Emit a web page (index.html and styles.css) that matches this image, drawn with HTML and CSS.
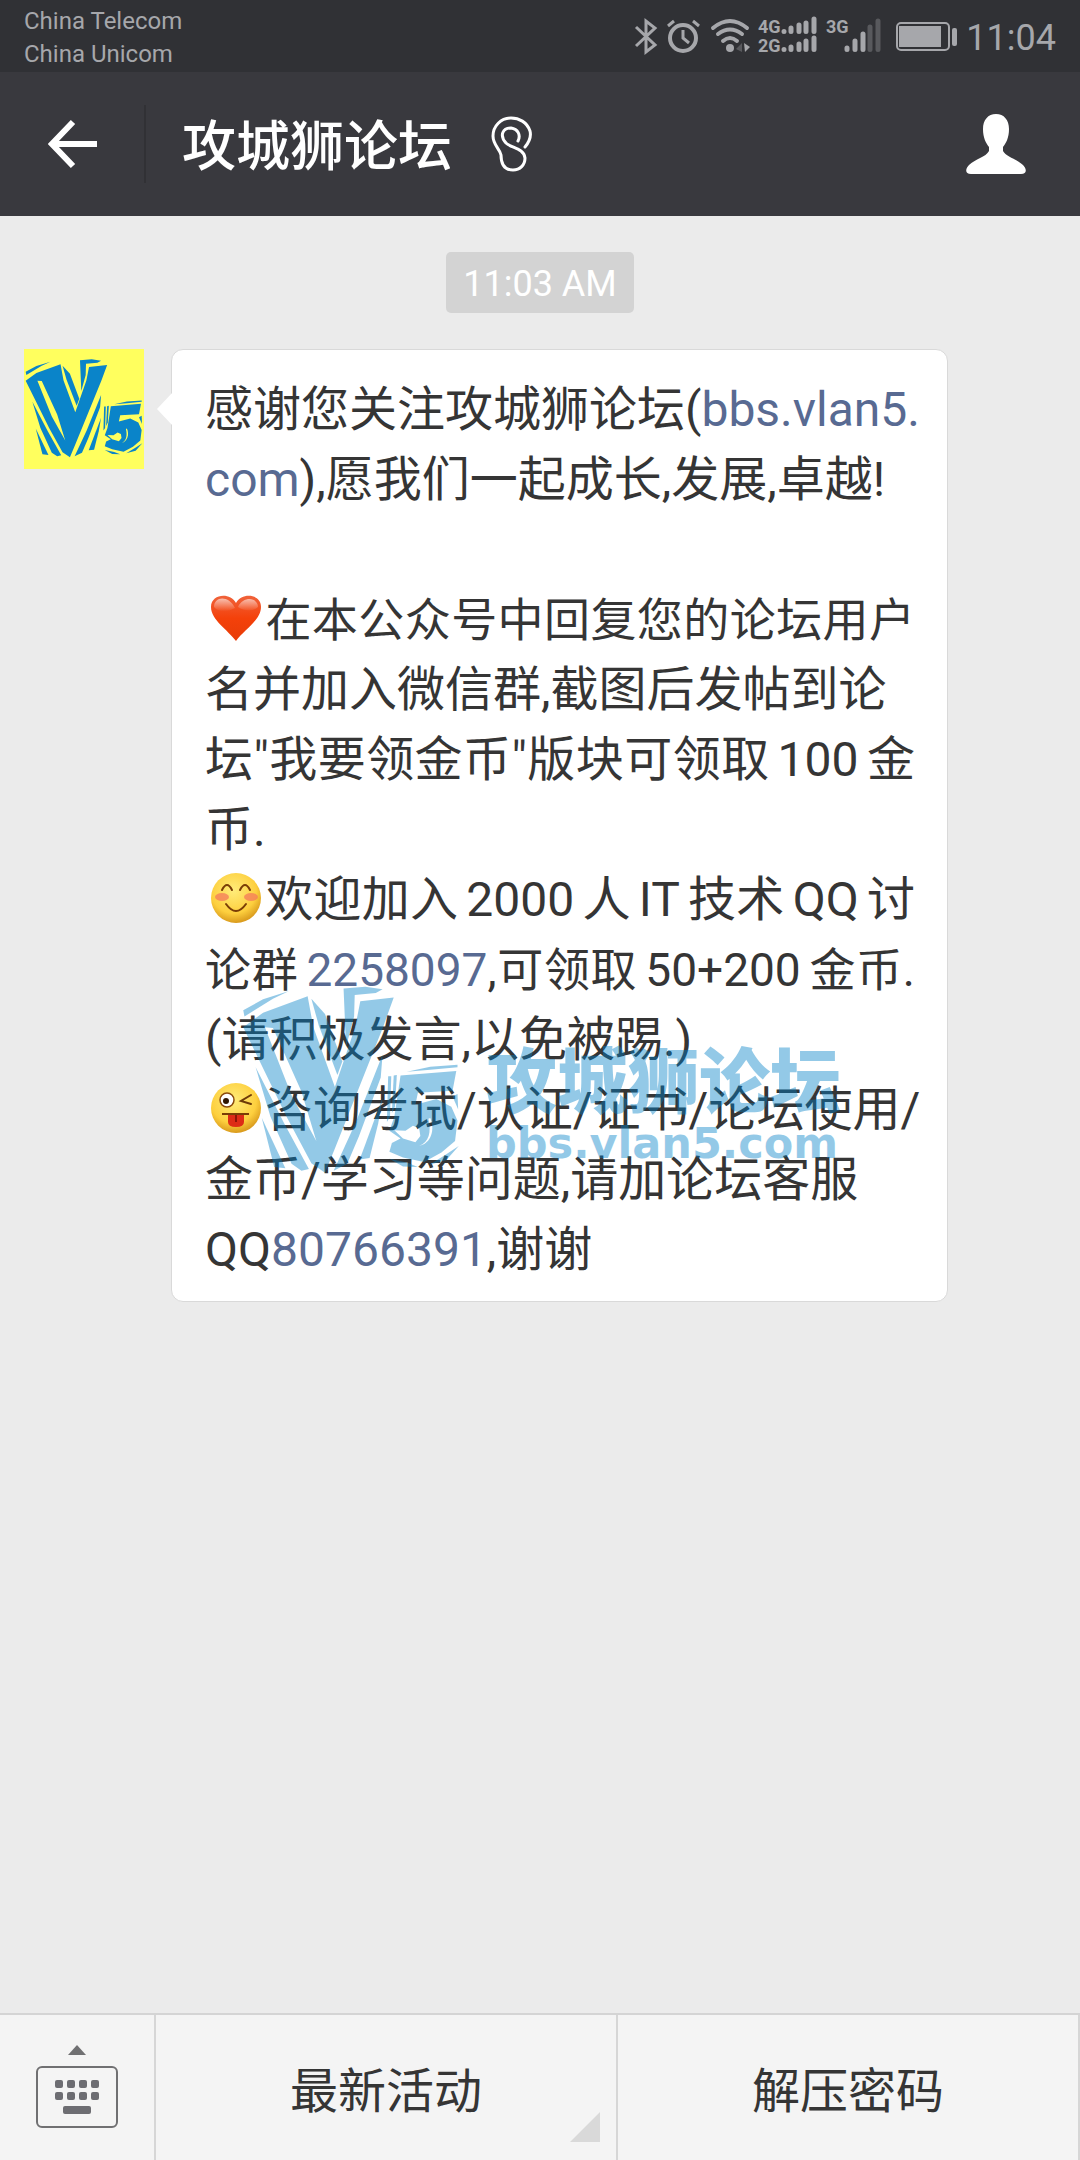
FILE: index.html
```html
<!DOCTYPE html>
<html lang="zh-CN">
<head>
	<meta charset="UTF-8">
	<meta name="viewport" content="width=device-width, initial-scale=1">
	<title>攻城狮论坛</title>
	<link rel="stylesheet" href="styles.css">
</head>
<body>

<!-- shared shapes -->
<svg class="defs" width="0" height="0" aria-hidden="true">
	<symbol id="v5" viewBox="16 56 352 296" preserveAspectRatio="none">
		<path d="M18 94 L50 77 L92 64 L66 76 L20 104 Z"/>
		<path fill-rule="evenodd" d="M18 121 L50 98 L122 72 L131 120 L166 215 L199 120 L207 80 L261 74 L244 120 L166 312 L150 350 L128 335 L88 262 Z M53 121 L96 228 L136 300 L112 222 L66 122 Z"/>
		<path d="M128 76 L150 100 L178 175 L170 196 L140 118 Z"/>
		<path d="M180 60 L215 57 L243 61 L232 67 L198 70 L197 104 L184 152 Z"/>
		<path d="M38 184 L84 272 L124 344 L112 347 L96 336 L62 262 Z"/>
		<path d="M48 264 L86 343 L68 341 Z"/>
		<path d="M243 164 L240 200 L205 292 L186 336 L164 347 L200 270 Z"/>
		<path d="M243 232 L236 272 L222 327 L206 329 Z"/>
		<path d="M282 191 L320 183 L364 180 L364 184 L320 188 Z"/>
		<path d="M252 198 L257 198 L255 262 L250 270 Z"/>
		<path d="M261 197 L266 196 L263 246 L258 256 Z"/>
		<path fill-rule="evenodd" d="M272 197 L362 190 L356 221 L300 224 L296 243 L330 234 L354 246 L364 268 L360 300 L338 318 L310 333 L276 326 L254 317 L258 303 L272 296 L254 284 L262 262 Z M262 283 L276 296 L296 302 L304 292 L302 280 L292 276 L280 284 Z M320 264 C328 282 322 304 302 308 C318 302 322 286 317 265 Z"/>
		<path d="M254 328 L282 334 L300 341 L276 340 Z"/>
		<path d="M366 308 L346 330 L318 338 L344 322 Z"/>
		<path d="M356 230 L364 226 L365 250 Z"/>
	</symbol>
	<radialGradient id="face" cx="45%" cy="35%" r="65%">
		<stop offset="0" stop-color="#ffec7a"/>
		<stop offset="0.7" stop-color="#fdcf3e"/>
		<stop offset="1" stop-color="#d99a1c"/>
	</radialGradient>
	<linearGradient id="red" x1="0" y1="0" x2="0" y2="1">
		<stop offset="0" stop-color="#f0623a"/>
		<stop offset="0.5" stop-color="#f4410a"/>
		<stop offset="1" stop-color="#e83c08"/>
	</linearGradient>
	<linearGradient id="shine" x1="0" y1="0" x2="0" y2="1">
		<stop offset="0" stop-color="#fff" stop-opacity="0.6"/>
		<stop offset="1" stop-color="#fff" stop-opacity="0"/>
	</linearGradient>
</svg>

<div class="status">
	<div class="carriers">
		<div>China Telecom</div>
		<div>China Unicom</div>
	</div>
	<div class="indicators">
		<svg width="24" height="72" viewBox="632 0 24 72" aria-label="Bluetooth">
			<path class="line" d="M634 27 L653 45 L644 52 V21 L653 28 L634 46"/>
		</svg>
		<svg width="36" height="72" viewBox="665 0 36 72" aria-label="Alarm">
			<circle class="line thick" cx="682" cy="38" r="13"/>
			<path class="line" d="M682 30 V38 L688 43 M667 26 L673 21 M698 26 L692 21"/>
		</svg>
		<svg width="40" height="72" viewBox="708 0 40 72" aria-label="Wi-Fi">
			<path class="line thick" d="M711 28 Q728 14 745 28 M716 34 Q728 25 740 34 M721 41 Q728 35 735 41"/>
			<circle class="solid" cx="728" cy="48" r="4"/>
			<path class="dim" d="M734 49 L740 43 V52 Z"/>
			<path class="solid" d="M742 43 L748 47 L743 52 Z"/>
		</svg>
		<svg class="net" width="60" height="72" viewBox="757 0 60 72" aria-label="Signal 4G 2G">
			<text x="757" y="33">4G</text>
			<text x="757" y="52">2G</text>
			<path class="bar" d="M783 31.5V31.6 M790 28V31.5 M798 25V31.5 M805 23V31.5 M813 19V31.5 M783 49.5V49.6 M790 47V49.5 M798 44V49.5 M805 41V49.5 M813 38V49.5"/>
		</svg>
		<svg class="net" width="56" height="72" viewBox="826 0 56 72" aria-label="Signal 3G">
			<text x="826" y="33">3G</text>
			<path class="bar" d="M847 48V49.5 M855 41V49.5 M863 34V49.5"/>
			<path class="bar off" d="M870 27V49.5 M878 21V49.5"/>
		</svg>
		<svg class="battery" width="62" height="72" viewBox="896 0 62 72" aria-label="Battery">
			<rect class="line thin" x="897" y="23" width="52" height="27" rx="4"/>
			<rect class="solid" x="899" y="26" width="42" height="21"/>
			<rect class="solid" x="952" y="28" width="5" height="18" rx="2"/>
		</svg>
		<div class="clock">11:04</div>
	</div>
</div>

<header class="bar-top">
	<button class="icon-button back" aria-label="返回">
		<svg width="50" height="50" viewBox="48 119 50 50">
			<path d="M73 122 L52 144 L73 166 M52 144 H97" fill="none" stroke="#fff" stroke-width="6"/>
		</svg>
	</button>
	<h1>攻城狮论坛</h1>
	<svg class="ear" width="42" height="58" viewBox="490 115 42 58" aria-label="听筒模式">
		<path d="M525 147 C530 141 531 135 530 131 C527 122 519 118 511 118 C501 118 493 126 493 136 C493 145 500 149 501 155 C501 165 505 170 513 170 C520 170 525 165 525 158 C524 148 511 148 506 143 C499 135 503 128 511 128 C518 129 521 135 518 141" fill="none" stroke="#fff" stroke-width="3" stroke-linecap="round"/>
	</svg>
	<button class="icon-button profile" aria-label="公众号资料">
		<svg width="60" height="60" viewBox="0 0 60 60">
			<path d="M30 0 C38 0 43 6 43 15 C43 24 40 29 37 33 V37 C40 43 51 45 57 51 C61 55 61 60 55 60 H5 C-1 60 -1 55 3 51 C9 45 20 43 23 37 V33 C20 29 17 24 17 15 C17 6 22 0 30 0 Z" fill="#fff"/>
		</svg>
	</button>
</header>

<main class="chat">
	<time class="stamp">11:03 AM</time>

	<div class="message">
		<svg class="avatar" viewBox="0 0 120 120" role="img" aria-label="V5">
			<rect width="120" height="120" fill="#ffff5e"/>
			<use href="#v5" x="1" y="10" width="118" height="99"/>
		</svg>
		<div class="bubble">
			<p>
				<span class="row">感谢您关注攻城狮论坛(<a href="#bbs">bbs.vlan5.</a></span>
				<span class="row left"><a href="#bbs">com</a>),愿我们一起成长,发展,卓越!</span>
			</p>
			<p>
				<span class="row tight"><svg class="emoji" viewBox="0 0 52 52" role="img" aria-label="爱心"><path d="M26 49 C18 38 1 28 1 15 C1 2 20 0 26 11 C32 0 51 2 51 15 C51 28 34 38 26 49 Z" fill="url(#red)"/><path d="M4 15 C4 4 19 3 25 16 C18 20 9 21 4 15 Z M28 15 C33 4 48 5 48 15 C43 20 34 19 28 15 Z" fill="url(#shine)"/></svg>在本公众号中回复您的论坛用户</span>
				<span class="row left">名并加入微信群,截图后发帖到论</span>
				<span class="row">坛"我要领金币"版块可领取<span class="latin">100</span>金</span>
				<span class="row left">币.</span>
			</p>
			<p>
				<span class="row"><svg class="emoji" viewBox="0 0 52 52" role="img" aria-label="愉快"><circle cx="26" cy="26" r="25" fill="url(#face)"/><ellipse cx="12" cy="25" rx="7" ry="4" fill="#f4795b" opacity="0.75"/><ellipse cx="41" cy="25" rx="7" ry="4" fill="#f4795b" opacity="0.75"/><path d="M12 18 Q17 8 22 18 M30 18 Q35 8 40 18 M16 32 Q26 46 36 32" fill="none" stroke="#7a3d06" stroke-width="2" stroke-linecap="round"/></svg>欢迎加入<span class="latin">2000</span>人<span class="latin">IT</span>技术<span class="latin">QQ</span>讨</span>
				<span class="row tight">论群<a class="before" href="#group">2258097</a>,可领取<span class="latin">50+200</span>金币.</span>
				<span class="row left">(请积极发言,以免被踢.)</span>
			</p>
			<p>
				<span class="row"><svg class="emoji" viewBox="0 0 52 52" role="img" aria-label="调皮"><circle cx="26" cy="26" r="25" fill="url(#face)"/><circle cx="17" cy="18" r="7" fill="#fff" stroke="#8a4a0c" stroke-width="1.5"/><circle cx="16" cy="19" r="3" fill="#301703"/><path d="M41 13 L31 19 L41 22" fill="none" stroke="#6d3a08" stroke-width="2" stroke-linecap="round"/><path d="M12 32 H39" stroke="#7a3d06" stroke-width="2"/><path d="M18 33 H34 V40 Q34 45 26 45 Q18 45 18 40 Z" fill="#dd2c16"/><path d="M26 33 V40" stroke="#8d1508" stroke-width="2"/></svg>咨询考试/认证/证书/论坛使用/</span>
				<span class="row left">金币/学习等问题,请加论坛客服</span>
				<span class="row left">QQ<a href="#service">80766391</a>,谢谢</span>
			</p>
			<div class="watermark">
				<svg class="mark" width="218" height="188"><use href="#v5" width="218" height="188"/></svg>
				<div class="mark-text">
					<div class="mark-name">攻城狮论坛</div>
					<div class="mark-site">bbs.vlan5.com</div>
				</div>
			</div>
		</div>
	</div>
</main>

<nav class="menu">
	<button class="menu-item" aria-label="键盘">
		<svg width="84" height="86" viewBox="36 2045 84 86">
			<path d="M78 2046 L87 2056 H69 Z" fill="#707072"/>
			<rect x="38" y="2068" width="80" height="60" rx="5" fill="none" stroke="#707072" stroke-width="2"/>
			<g fill="#6d6d72">
				<rect x="56" y="2081" width="8" height="8" rx="2"/>
				<rect x="68" y="2081" width="8" height="8" rx="2"/>
				<rect x="80" y="2081" width="8" height="8" rx="2"/>
				<rect x="92" y="2081" width="8" height="8" rx="2"/>
				<rect x="56" y="2093" width="8" height="8" rx="2"/>
				<rect x="68" y="2093" width="8" height="8" rx="2"/>
				<rect x="80" y="2093" width="8" height="8" rx="2"/>
				<rect x="92" y="2093" width="8" height="8" rx="2"/>
				<rect x="64" y="2107" width="28" height="8" rx="2"/>
			</g>
		</svg>
	</button>
	<button class="menu-item has-sub">最新活动</button>
	<button class="menu-item">解压密码</button>
</nav>

</body>
</html>
```
FILE: styles.css
```css
* { box-sizing: border-box; }
html, body { margin: 0; padding: 0; }
body { display: flex; flex-direction: column; min-height: 100vh; background: #ebebeb; }
body { font-family: Roboto, "Noto Sans CJK SC", sans-serif; color: #353535; }
button { font: inherit; color: inherit; border: 0; padding: 0; background: none; cursor: pointer; }
svg { display: block; }
a { color: #586a92; text-decoration: none; }
.defs { position: absolute; }

/* status bar */
.status { display: flex; justify-content: space-between; height: 72px; padding: 0 24px; background: #303135; color: #a6a7ab; }
.carriers { padding-top: 5px; font-size: 24px; line-height: 33px; }
.indicators { display: flex; gap: 8px; }
.clock { font-size: 36px; line-height: 76px; }
.line { fill: none; stroke: #a6a7ab; stroke-width: 3px; }
.thick { stroke-width: 4px; stroke-linecap: round; }
.thin { stroke-width: 2px; }
.solid { fill: #a6a7ab; }
.dim { fill: #58595d; }
.net text { font-size: 18px; font-weight: 700; font-family: "Liberation Sans Narrow", Roboto, sans-serif; fill: #a6a7ab; }
.bar { fill: none; stroke: #a6a7ab; stroke-width: 5px; stroke-linecap: round; }
.off { stroke: #58595d; }
.battery { margin-left: 6px; }

/* title bar */
.bar-top { display: flex; align-items: center; height: 144px; padding-right: 54px; background: #39393e; color: #fff; }
.icon-button { display: flex; align-items: center; }
.back { width: 146px; height: 78px; padding-left: 48px; border-right: 2px solid #313135; }
.bar-top h1 { margin: 0 0 0 36px; padding-top: 8px; font-size: 54px; line-height: 78px; font-weight: 500; }
.ear { margin-left: 38px; }
.profile { margin-left: auto; }

/* conversation */
.chat { flex: 1; display: flex; flex-direction: column; padding: 36px 24px; }
.stamp { align-self: center; padding: 3px 17px 0; border-radius: 5px; background: #d3d3d3; color: #fff; font-size: 36px; line-height: 58px; }
.message { display: flex; align-items: flex-start; gap: 27px; margin-top: 36px; }
.avatar { flex: none; width: 120px; height: 120px; fill: #0a84c9; }
.bubble { position: relative; width: 777px; padding: 25px 32px 16px 33px; border: 1px solid #d9d9d9; border-radius: 12px; background: #fff; }
.bubble { font-size: 48px; line-height: 70px; }
.bubble::before { content: ""; position: absolute; left: -15px; top: 42px; width: 16px; height: 34px; background: #fff; clip-path: polygon(0 50%, 100% 0, 100% 100%); }
.bubble p { margin: 0; }
.bubble p:first-child { margin-bottom: 70px; }
.row { display: block; height: 70px; white-space: nowrap; text-align: justify; text-align-last: justify; }
.left { text-align-last: left; }
.tight { font-size: 46px; }
.latin { margin: 0 8px; }
.before { margin-left: 8px; }
.emoji { display: inline-block; width: 52px; height: 52px; margin: 0 3px 0 5px; vertical-align: -8px; }

.watermark { position: absolute; left: 70px; top: 636px; display: flex; gap: 26px; color: #0080c8; fill: #0080c8; opacity: 0.42; pointer-events: none; }
.mark { flex: none; }
.mark-text { padding-top: 61px; white-space: nowrap; }
.mark-name { font-size: 71px; line-height: 72px; font-weight: 900; }
.mark-site { font-family: "DejaVu Sans", sans-serif; font-size: 43px; line-height: 48px; font-weight: 700; }

/* bottom menu */
.menu { display: grid; grid-template-columns: 156px 1fr 1fr; height: 147px; border-top: 2px solid #d4d4d4; background: #f4f4f4; }
.menu-item { display: flex; align-items: center; justify-content: center; padding-bottom: 2px; border-right: 2px solid #d6d6d6; font-size: 48px; }
.has-sub { position: relative; }
.has-sub::after { content: ""; position: absolute; right: 16px; bottom: 18px; width: 30px; height: 30px; background: #d9d9d9; clip-path: polygon(100% 0, 100% 100%, 0 100%); }
```
